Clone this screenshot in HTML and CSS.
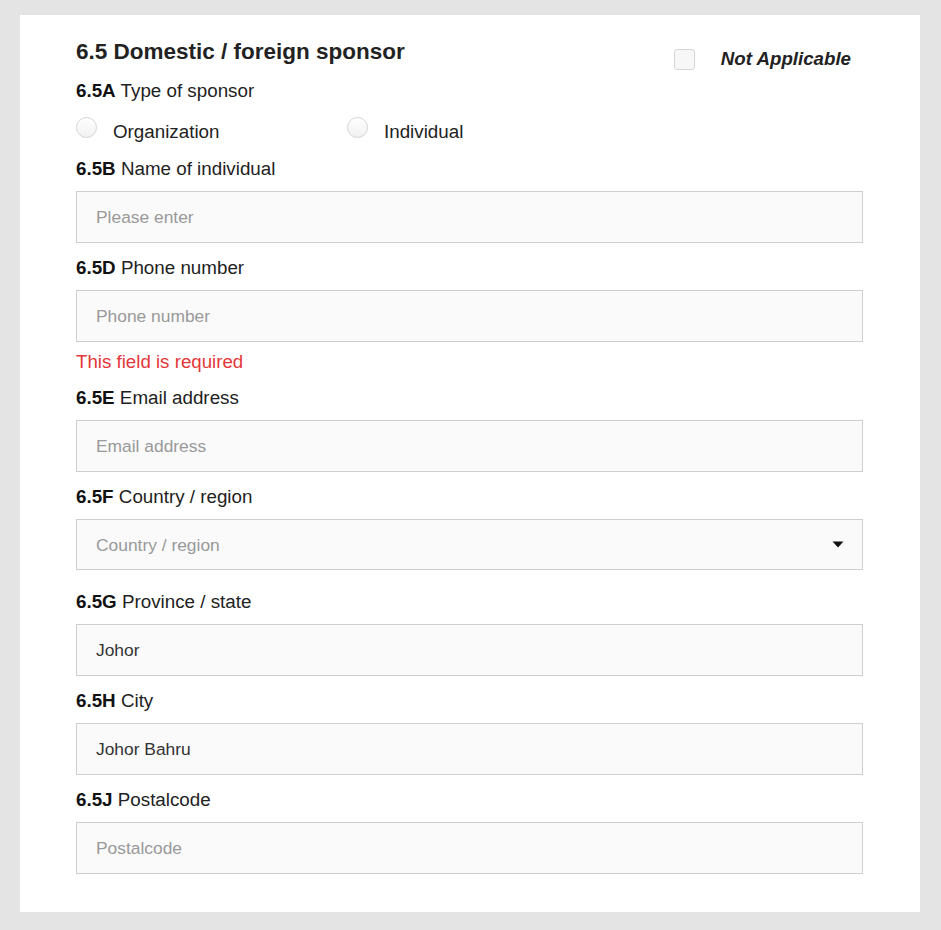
FILE: index.html
```html
<!DOCTYPE html>
<html lang="en">
<head>
<meta charset="utf-8">
<title>Domestic / foreign sponsor</title>
<link rel="stylesheet" href="styles.css">
</head>
<body>
<div class="card">
  <div class="head-row">
    <h2 class="section-title">6.5 Domestic / foreign sponsor</h2>
    <label class="na">
      <span class="checkbox"></span>
      <span class="na-text">Not Applicable</span>
    </label>
  </div>

  <div class="label"><b>6.5A</b> Type of sponsor</div>
  <div class="radio-row">
    <label class="option option-first"><span class="radio"></span><span>Organization</span></label>
    <label class="option"><span class="radio"></span><span>Individual</span></label>
  </div>

  <div class="label"><b>6.5B</b> Name of individual</div>
  <input class="field" type="text" placeholder="Please enter">

  <div class="label"><b>6.5D</b> Phone number</div>
  <input class="field field-error" type="text" placeholder="Phone number">
  <div class="error">This field is required</div>

  <div class="label"><b>6.5E</b> Email address</div>
  <input class="field" type="text" placeholder="Email address">

  <div class="label"><b>6.5F</b> Country / region</div>
  <div class="select-wrap">
    <select class="field select">
      <option>Country / region</option>
    </select>
    <svg class="caret" width="12" height="7" viewBox="0 0 12 7"><path d="M0.5 0.5 L11.5 0.5 L6 6.5 Z" fill="#111"/></svg>
  </div>

  <div class="label"><b>6.5G</b> Province / state</div>
  <input class="field" type="text" value="Johor">

  <div class="label"><b>6.5H</b> City</div>
  <input class="field" type="text" value="Johor Bahru">

  <div class="label"><b>6.5J</b> Postalcode</div>
  <input class="field field-last" type="text" placeholder="Postalcode">
</div>
</body>
</html>
```

FILE: styles.css
```css
* { box-sizing: border-box; }

html, body {
  margin: 0;
  background: #e4e4e4;
}

body {
  padding: 15px 21px 19px 20px;
  font-family: "Liberation Sans", Arial, sans-serif;
  color: #222;
}

.card {
  background: #fff;
  padding: 24px 57px 38px 56px;
  display: flex;
  flex-direction: column;
}

.head-row {
  display: flex;
  justify-content: space-between;
  align-items: flex-start;
  height: 30px;
  margin-bottom: 10px;
}

.section-title {
  margin: 0;
  font-size: 22.5px;
  line-height: 26px;
  font-weight: bold;
  color: #222;
}

.na {
  display: flex;
  align-items: center;
  margin-top: 10px;
  margin-right: 12px;
  height: 20px;
}

.checkbox {
  width: 21px;
  height: 21px;
  border: 1px solid #d6d6d6;
  border-radius: 3px;
  background: #f7f7f7;
  margin-right: 26px;
}

.na-text {
  font-size: 18.7px;
  font-weight: bold;
  font-style: italic;
  line-height: 20px;
  color: #222;
}

.label {
  font-size: 18.8px;
  line-height: 24px;
  color: #222;
  margin-bottom: 10px;
}

.label b {
  color: #111;
}

.radio-row {
  display: flex;
  align-items: center;
  height: 24px;
  margin-top: 7px;
  margin-bottom: 13px;
}

.option {
  display: flex;
  align-items: center;
  font-size: 18.8px;
  line-height: 24px;
  color: #222;
}

.option-first {
  width: 271px;
}

.radio {
  width: 21px;
  height: 21px;
  border-radius: 50%;
  border: 1px solid #d4d4d4;
  background: linear-gradient(#ffffff, #f1f1f1);
  margin-right: 16px;
  margin-bottom: 9px;
}

.field {
  display: block;
  width: 100%;
  height: 52px;
  margin: 0 0 13px 0;
  padding: 0 19px;
  border: 1px solid #cfcfcf;
  border-radius: 0;
  background: #fafafa;
  font-family: "Liberation Sans", Arial, sans-serif;
  font-size: 17.4px;
  color: #333;
  outline: none;
}

.field::placeholder {
  color: #999;
}

.field-error {
  margin-bottom: 8px;
}

.field-last {
  margin-bottom: 0;
}

.error {
  font-size: 18.7px;
  line-height: 24px;
  color: #e3373a;
  margin-bottom: 12px;
}

.select-wrap {
  position: relative;
  margin-bottom: 20px;
}

.select {
  -webkit-appearance: none;
  appearance: none;
  height: 51px;
  margin: 0;
  color: #999;
}

.caret {
  position: absolute;
  right: 19px;
  top: 22px;
  pointer-events: none;
}
```
